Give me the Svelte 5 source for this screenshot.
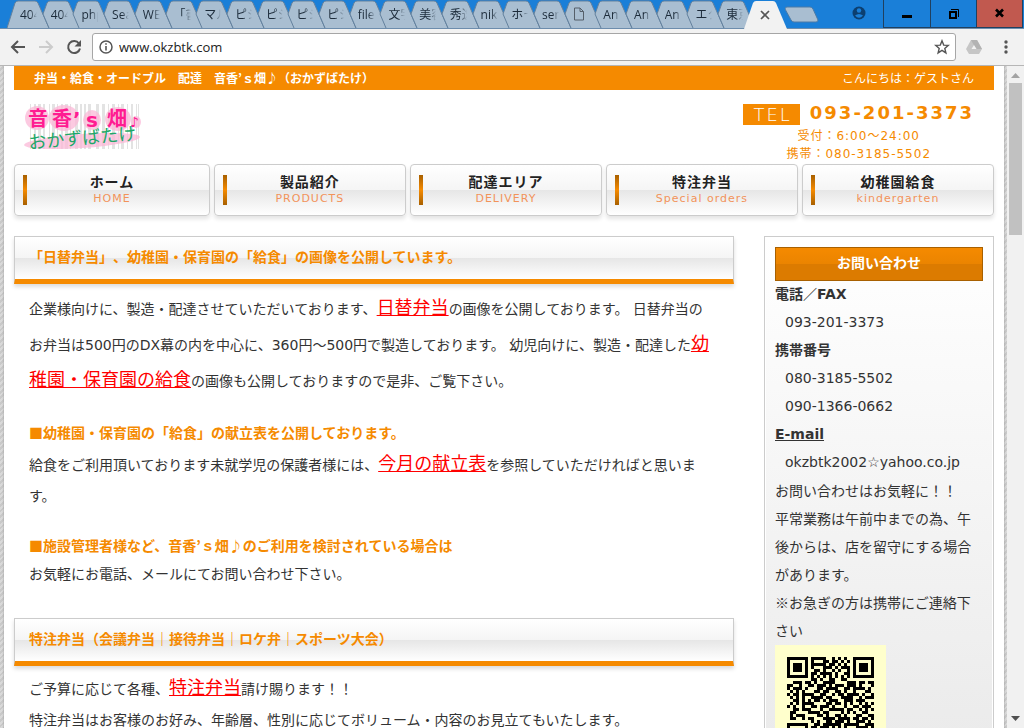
<script>
	const tabs = [
		'404', '404', 'php', 'Sea', 'WE', '「書', 'マル', 'ピシ', 'ピシ', 'ピシ', 'ピシ', 'file',
		'文字', '美容', '秀逸', 'nik', 'ホー', 'ser', '', 'An', 'An', 'An', 'エク', '東京'
	];

	const navItems = [
		{ display: 'ホーム', sub: 'HOME' },
		{ display: '製品紹介', sub: 'PRODUCTS' },
		{ display: '配達エリア', sub: 'DELIVERY' },
		{ display: '特注弁当', sub: 'Special orders' },
		{ display: '幼稚園給食', sub: 'kindergarten' }
	];

	// QR code, one string per row of modules
	const qrRows = [
		'11111110111110010101001111111',
		'10000010100011011010101000001',
		'10111010111110110101001011101',
		'10111010100011101011101011101',
		'10111010011010010100101011101',
		'10000010110111101001101000001',
		'11111110101010101010101111111',
		'00000000110100110011000000000',
		'00111011010011110000111011011',
		'11001001101110101110111010001',
		'10111010001101111001101111010',
		'01010100011011001101001000110',
		'10110111100110010110111101001',
		'01010100111101100011110010111',
		'00110101011010111001110111000',
		'01010111100001101101010010101',
		'10100100110111010001001101110',
		'00110111000100111110110010101',
		'01100001111011000010101001100',
		'01011100001101001101000110011',
		'01100101100011110111101101101',
		'00000000101001101110100111010',
		'11111110011011111101111100111',
		'10000010110111010101000111101',
		'10111010101100111101111110011',
		'10111010011011001010011010110',
		'10111010110100110111001101001',
		'10000010011110001001110010110',
		'11111110101001110110101101011'
	];

	const qrPath = qrRows
		.map((row, y) => [...row].map((c, x) => (c === '1' ? `M${x} ${y}h1v1h-1z` : '')).join(''))
		.join('');

	const logoBars = [
		[30, 1], [34, 2], [38, 3], [43, 2], [49, 1], [52, 3], [57, 1], [61, 2], [65, 3], [70, 1],
		[75, 3], [80, 2], [84, 2], [88, 3], [96, 3], [102, 3], [108, 1], [112, 3], [118, 1],
		[121, 3], [127, 1], [131, 2], [136, 1], [138, 1]
	];

	let address = $state('www.okzbtk.com');
</script>

<div class="browser">
	<div class="tab-strip">
		<div class="tabs">
			{#each tabs as tab, i}
				<button class="tab" aria-label={tab || 'Untitled'}>
					<svg class="tab-shape" width="43" height="28" viewBox="0 0 43 28" aria-hidden="true">
						{#if i === 0}
							<path d="M0 28 L8 3 Q9 1 11 1 H28 Q30 1 31 3 L42 28" />
						{:else}
							<path d="M11 28 L5 14 L9 3 Q10 1 12 1 H28 Q30 1 31 3 L42 28" />
						{/if}
					</svg>
					{#if tab}
						<span class="tab-title">{tab}</span>
					{:else}
						<svg class="doc" width="12" height="14" viewBox="0 0 12 14" aria-hidden="true">
							<path d="M1.5 1 H7 L10.5 4.500 V13 H1.500 Z M7 1 V4.500 H10.500" />
						</svg>
					{/if}
				</button>
			{/each}
		</div>
		<button class="active-tab" aria-label="Close tab">
			<svg width="43" height="29" viewBox="0 0 43 29" aria-hidden="true">
				<path d="M0 29 L9 3 Q10 1 12 1 H29 Q31 1 32 3 L43 29 Z" fill="#f2f2f2" />
				<path d="M17 11 l8 8 M25 11 l-8 8" stroke="#555" stroke-width="1.700" fill="none" />
			</svg>
		</button>
		<button class="new-tab" aria-label="New tab">
			<svg width="34" height="17" viewBox="0 0 34 17" aria-hidden="true">
				<path d="M2 1 H25 Q27 1 28 3 L33 14 Q33 16 31 16 H9 Q7 16 6 14 L0 3 Q0 1 2 1 Z" fill="#a9bed1" stroke="#4d7ba6" />
			</svg>
		</button>
		<button class="user" aria-label="User">
			<svg width="14" height="14" viewBox="0 0 14 14" aria-hidden="true">
				<circle cx="7" cy="7" r="6.500" fill="#0c3f70" />
				<circle cx="7" cy="4.500" r="2.200" fill="#1a7fd8" />
				<path d="M3 9.500 Q7 6.500 11 9.500 Q7 14 3 9.500" fill="#1a7fd8" />
			</svg>
		</button>
		<div class="window-buttons">
			<button aria-label="Minimize">
				<svg width="12" height="12" viewBox="0 0 12 12"><path d="M1 7h10v3H1z" /></svg>
			</button>
			<button aria-label="Restore">
				<svg width="12" height="12" viewBox="0 0 12 12">
					<path d="M2 4h6v6h-6z" fill="none" stroke="#000" stroke-width="2" />
					<path d="M3 1.500h7.500v7.500" fill="none" stroke="#000" />
				</svg>
			</button>
			<button class="close" aria-label="Close">
				<svg width="12" height="12" viewBox="0 0 12 12">
					<path d="M2 1.500 l7 7 M9 1.500 l-7 7" stroke="#000" stroke-width="2.600" />
				</svg>
			</button>
		</div>
	</div>

	<div class="toolbar">
		<button aria-label="Back">
			<svg width="16" height="16" viewBox="0 0 16 16"><path d="M15 8H2M8 2L2 8l6 6" fill="none" stroke="#555" stroke-width="2" /></svg>
		</button>
		<button aria-label="Forward">
			<svg width="16" height="16" viewBox="0 0 16 16"><path d="M1 8h13M8 2l6 6-6 6" fill="none" stroke="#ccc" stroke-width="2" /></svg>
		</button>
		<button aria-label="Reload">
			<svg width="16" height="16" viewBox="0 0 16 16">
				<path d="M13 4.500A6 6 0 1 0 14 9.500" fill="none" stroke="#555" stroke-width="2" />
				<path d="M15 1v6.500H8.500z" fill="#555" />
			</svg>
		</button>
		<div class="address">
			<svg width="14" height="14" viewBox="0 0 14 14" aria-hidden="true">
				<circle cx="7" cy="7" r="6" fill="none" stroke="#555" stroke-width="1.500" />
				<path d="M7 6v4.500M7 3.200v1.600" stroke="#555" stroke-width="1.600" />
			</svg>
			<input type="text" aria-label="Address" bind:value={address} />
			<button aria-label="Bookmark">
				<svg width="16" height="16" viewBox="0 0 16 16">
					<path d="M8 1.800l1.700 4.300 4.600.3-3.500 3 1.100 4.500L8 11.400l-3.900 2.500 1.100-4.500-3.500-3 4.600-.3z" fill="none" stroke="#555" stroke-width="1.400" />
				</svg>
			</button>
		</div>
		<button class="drive" aria-label="Drive">
			<svg width="16" height="14" viewBox="0 0 16 14">
				<path d="M5 0h6l5 9-3 5H3L0 9z" fill="#c6c6c6" />
				<path d="M5 0h6l5 9h-6z" fill="#b3b3b3" />
				<path d="M8 5l2.500 4h-5z" fill="#f2f2f2" />
			</svg>
		</button>
		<button class="more" aria-label="Menu">
			<svg width="4" height="14" viewBox="0 0 4 14">
				<circle cx="2" cy="2" r="1.700" fill="#555" />
				<circle cx="2" cy="7" r="1.700" fill="#555" />
				<circle cx="2" cy="12" r="1.700" fill="#555" />
			</svg>
		</button>
	</div>

	<div class="viewport">
		<div class="backdrop">
			<div class="page">
				<div class="top-bar">
					<h1>弁当・給食・オードブル　配達　音香’ｓ畑♪（おかずばたけ）</h1>
					<span>こんにちは：ゲストさん</span>
				</div>

				<header>
					<a class="logo" href="/" aria-label="音香’ｓ畑♪">
						<svg width="120" height="50" viewBox="24 102 120 50">
							{#each logoBars as [x, w]}
								<rect {x} y="104" width={w} height="45" fill="#e3e3e3" />
							{/each}
							<g fill="#fbb9d8" opacity="0.750">
								<ellipse cx="37" cy="118" rx="12" ry="12" />
								<ellipse cx="64" cy="118" rx="15" ry="13" />
								<ellipse cx="92" cy="120" rx="9" ry="10" />
								<ellipse cx="118" cy="119" rx="13" ry="12" />
								<ellipse cx="136" cy="122" rx="5" ry="6" />
								<ellipse cx="82" cy="141" rx="58" ry="7" transform="rotate(-4 82 141)" />
							</g>
							<g fill="#ff1c91" class="logo-name">
								<text x="28" y="126">音</text>
								<text x="52" y="126">香</text>
								<text x="73" y="126">’</text>
								<text x="86" y="127">s</text>
								<text x="107" y="126">畑</text>
								<text x="130" y="127" class="note">♪</text>
							</g>
							<text class="logo-kana" x="29" y="149" fill="#20a868" transform="rotate(-5 29 149)">おかずばたけ</text>
						</svg>
					</a>
					<div class="contact">
						<p class="tel"><span>TEL</span><strong>093-201-3373</strong></p>
						<p>受付：6:00～24:00</p>
						<p>携帯：080-3185-5502</p>
					</div>
				</header>

				<nav>
					{#each navItems as item}
						<a href="/">
							<b>{item.display}</b>
							<small>{item.sub}</small>
						</a>
					{/each}
				</nav>

				<div class="columns">
					<main>
						<h2>「日替弁当」、幼稚園・保育園の「給食」の画像を公開しています。</h2>
						<p class="loose">
							企業様向けに、製造・配達させていただいております、<a href="/">日替弁当</a>の画像を公開しております。 日替弁当のお弁当は500円のDX幕の内を中心に、360円～500円で製造しております。 幼児向けに、製造・配達した<a href="/">幼稚園・保育園の給食</a>の画像も公開しておりますので是非、ご覧下さい。
						</p>
						<h3>■幼稚園・保育園の「給食」の献立表を公開しております。</h3>
						<p>
							給食をご利用頂いております未就学児の保護者様には、<a href="/">今月の献立表</a>を参照していただければと思います。
						</p>
						<h3>■施設管理者様など、音香’ｓ畑♪のご利用を検討されている場合は</h3>
						<p class="tight">お気軽にお電話、メールにてお問い合わせ下さい。</p>
						<h2 class="next">特注弁当（会議弁当｜接待弁当｜ロケ弁｜スポーツ大会）</h2>
						<p>
							ご予算に応じて各種、<a href="/">特注弁当</a>請け賜ります！！<br />
							特注弁当はお客様のお好み、年齢層、性別に応じてボリューム・内容のお見立てもいたします。
						</p>
					</main>

					<aside>
						<h2>お問い合わせ</h2>
						<dl>
							<dt>電話／FAX</dt>
							<dd>093-201-3373</dd>
							<dt>携帯番号</dt>
							<dd>080-3185-5502</dd>
							<dd>090-1366-0662</dd>
							<dt><a href="/">E-mail</a></dt>
							<dd>okzbtk2002☆yahoo.co.jp</dd>
						</dl>
						<p>お問い合わせはお気軽に！！</p>
						<p>平常業務は午前中までの為、午後からは、店を留守にする場合があります。</p>
						<p>※お急ぎの方は携帯にご連絡下さい</p>
						<svg class="qr" width="111" height="111" viewBox="-4 -4 37 37" shape-rendering="crispEdges" role="img" aria-label="QR">
							<path d={qrPath} />
						</svg>
					</aside>
				</div>
			</div>
		</div>
		<div class="scrollbar">
			<svg width="9" height="5" viewBox="0 0 9 5"><path d="M0 5L4.500 0 9 5z" fill="#a3a3a3" /></svg>
			<div class="thumb"></div>
			<svg class="down" width="9" height="5" viewBox="0 0 9 5"><path d="M0 0L4.500 5 9 0z" fill="#505050" /></svg>
		</div>
	</div>
</div>

<style>
	:global(body) {
		overflow: hidden;
	}

	.browser {
		display: flex;
		flex-direction: column;
		height: 100vh;
		font-family: 'DejaVu Sans', 'Noto Sans CJK JP', sans-serif;
		font-size: 14px;
		text-spacing-trim: space-all;
		color: #333;
	}

	h1,
	h2,
	h3,
	p,
	dl,
	dd {
		margin: 0;
	}

	button {
		padding: 0;
		border: none;
		background: none;
	}

	svg {
		display: block;
	}

	/* Tab strip */
	.tab-strip {
		display: flex;
		flex: none;
		height: 28px;
		padding: 0 1px 0 7px;
		background: #1a7fd8;
		border-bottom: 1px solid #6d8dad;
	}

	.tabs {
		display: flex;
		flex: 1;
		min-width: 0;
	}

	.tab {
		position: relative;
		flex: 1;
		min-width: 0;
		padding-left: 13px;
		font: 12px 'Open Sans', 'Noto Sans CJK JP', sans-serif;
		color: #1c2b3a;
		text-align: left;
	}

	.tab-shape {
		position: absolute;
		top: 0;
		left: 0;
	}

	.tab-shape path {
		fill: #a9bed1;
		stroke: #64819d;
	}

	.tab-title {
		display: block;
		position: relative;
		width: 17px;
		overflow: hidden;
		white-space: nowrap;
		mask-image: linear-gradient(to right, #000 60%, transparent);
	}

	.doc {
		position: relative;
		fill: none;
		stroke: #555f6a;
	}

	.active-tab {
		position: relative;
		flex: none;
		width: 41px;
		height: 29px;
	}

	.new-tab {
		flex: none;
		align-self: center;
		width: 34px;
	}

	.user {
		flex: none;
		width: 64px;
		padding-left: 33px;
	}

	.user svg {
		margin-bottom: 2px;
	}

	.window-buttons {
		display: flex;
		flex: none;
	}

	.window-buttons button {
		display: flex;
		align-items: center;
		justify-content: center;
		box-sizing: border-box;
		width: 46px;
		border: 1px solid #20405f;
		border-top: none;
		border-left-width: 0;
	}

	.window-buttons button:first-child {
		width: 48px;
		border-left-width: 1px;
	}

	.window-buttons .close {
		background: #c1594f;
	}

	/* Toolbar */
	.toolbar {
		display: flex;
		flex: none;
		align-items: center;
		gap: 12px;
		height: 36px;
		padding: 0 16px 0 10px;
		background: #f2f2f2;
		border-bottom: 1px solid #b6b6b6;
	}

	.address {
		display: flex;
		flex: 1;
		align-items: center;
		gap: 6px;
		height: 26px;
		margin-left: -2px;
		padding: 0 5px 0 6px;
		background: #fff;
		border: 1px solid #a6a6a6;
		border-radius: 3px;
	}

	.address input {
		flex: 1;
		padding: 0;
		border: none;
		outline: none;
		font: 13px 'Open Sans', sans-serif;
		color: #222;
	}

	.drive {
		margin-left: -2px;
	}

	.more {
		margin-left: 10px;
	}

	/* Page area */
	.viewport {
		display: flex;
		flex: 1;
		min-height: 0;
		overflow: hidden;
	}

	.backdrop {
		flex: 1;
		padding: 0 3px 0 4px;
		background: repeating-linear-gradient(135deg, #d9d9d9 0 2px, #c9c9c9 2px 4px);
	}

	.page {
		max-width: 980px;
		min-height: 100%;
		margin: 0 auto;
		padding: 0 10px;
		background: #fff;
		box-shadow: 0 0 2px #999;
	}

	.scrollbar {
		display: flex;
		flex: none;
		flex-direction: column;
		align-items: center;
		width: 17px;
		padding: 7px 0;
		box-sizing: border-box;
		background: #f1f1f1;
	}

	.thumb {
		width: 13px;
		height: 152px;
		margin-top: 5px;
		background: #c1c1c1;
	}

	.down {
		margin-top: auto;
	}

	.top-bar {
		display: flex;
		align-items: center;
		justify-content: space-between;
		height: 22px;
		padding: 0 20px 2px;
		background: #f58a00;
		color: #fff;
		font: 12px 'Noto Sans CJK JP', sans-serif;
	}

	.top-bar h1 {
		font-size: 12px;
	}

	header {
		display: flex;
		justify-content: space-between;
		height: 74px;
	}

	.logo {
		margin: 12px 0 0 10px;
	}

	.logo-name {
		font-size: 20px;
		font-weight: bold;
	}

	.logo-name .note {
		font-size: 14px;
	}

	.logo-kana {
		font-size: 18px;
	}

	.contact {
		padding: 14px 20px 0 0;
		color: #f58a00;
		font-size: 12px;
		letter-spacing: 1px;
		text-align: center;
	}

	.contact p {
		line-height: 18px;
	}

	.contact .tel {
		display: flex;
		align-items: flex-start;
		gap: 10px;
		height: 23px;
		font-size: 18px;
		letter-spacing: 2px;
	}

	.tel span {
		padding: 0 8px 0 10px;
		background: #f58a00;
		color: #fff;
		line-height: 21px;
		font-weight: 200;
	}

	nav {
		display: grid;
		grid-template-columns: 1.02fr repeat(4, 1fr);
		gap: 4px;
	}

	nav a {
		display: flex;
		flex-direction: column;
		height: 50px;
		border: 1px solid #ccc;
		border-radius: 4px;
		background:
			linear-gradient(#a86000, #f58a00 50%, #a86000) 8px 10px / 4px 30px no-repeat,
			linear-gradient(#fff, #f5f5f5 50%, #e6e6e6 50%, #fff);
		box-shadow: 0 3px 4px #e4e4e4;
		color: #222;
		letter-spacing: 1px;
		text-align: center;
		text-decoration: none;
	}

	nav b {
		margin-top: 7px;
		line-height: 20px;
	}

	nav small {
		color: #f2935a;
		font-size: 11px;
		line-height: 14px;
	}

	.columns {
		display: flex;
		gap: 30px;
		margin-top: 20px;
	}

	main {
		flex: 1;
		min-width: 0;
	}

	main h2 {
		margin-bottom: 6px;
		padding: 0 14px 4px;
		border: 1px solid #ccc;
		border-bottom: 5px solid #f58a00;
		background: linear-gradient(#fff, #f5f5f5 50%, #e6e6e6 50%, #fff);
		box-shadow: 0 3px 4px #ddd;
		color: #f58a00;
		font-family: 'Noto Sans CJK JP', sans-serif;
		font-size: 14px;
		line-height: 38px;
	}

	main .next {
		margin-top: 30px;
	}

	main h3 {
		margin-top: 18px;
		padding: 0 15px;
		color: #f58a00;
		font-family: 'Noto Sans CJK JP', sans-serif;
		font-size: 14px;
		line-height: 31px;
	}

	main p {
		padding: 2px 20px 0 15px;
		line-height: 31px;
	}

	main .loose {
		padding-top: 1px;
		line-height: 36px;
	}

	main .tight {
		padding-top: 0;
		line-height: 27px;
	}

	main p a {
		color: #f00;
		font-size: 18px;
		line-height: 18px;
	}

	aside {
		flex: none;
		width: 208px;
		padding: 10px;
		border: 1px solid #ccc;
		background: linear-gradient(#fff, #ebebeb 500px);
		box-shadow: inset 0 0 0 1px #fff;
		line-height: 28px;
	}

	aside h2 {
		padding-bottom: 2px;
		border: 1px solid #a86000;
		background: linear-gradient(#f58a00, #eb8400 50%, #dc7b00 50%);
		color: #fff;
		font-size: 14px;
		line-height: 30px;
		text-align: center;
	}

	aside dl {
		margin-top: -1px;
	}

	aside p {
		font-family: 'Noto Sans CJK JP', sans-serif;
	}

	dt {
		font-weight: bold;
	}

	dt a {
		color: #333;
	}

	dd {
		padding-left: 10px;
	}

	.qr {
		margin-top: 1px;
		background: #ffffcc;
	}
</style>
